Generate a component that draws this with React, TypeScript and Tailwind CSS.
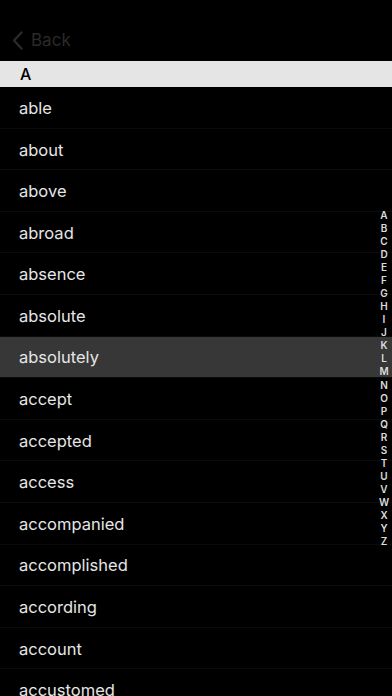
import React from 'react';

const words = [
  'able', 'about', 'above', 'abroad', 'absence', 'absolute', 'absolutely', 'accept',
  'accepted', 'access', 'accompanied', 'accomplished', 'according', 'account',
  'accustomed',
];

const letters = 'ABCDEFGHIJKLMNOPQRSTUVWXYZ'.split('');

export default function App() {
  return (
    <div className="h-[696px] w-[392px] overflow-hidden bg-black text-[#e6e6e6]" style={{ fontFamily: 'Inter, "Noto Sans", sans-serif' }}>
      {/* Nav bar */}
      <div className="flex h-[61px] items-end pb-[8px] pl-[11px]">
        <button className="flex items-center gap-[7px] text-[17px] text-[#2a2a2a]">
          <svg width="13" height="21" viewBox="0 0 13 21" fill="none">
            <path d="M10.5 2.5 L3 10.5 L10.5 18.5" stroke="#2a2a2a" strokeWidth="2.4" strokeLinecap="round" strokeLinejoin="round" />
          </svg>
          <span>Back</span>
        </button>
      </div>

      <div className="relative h-[635px]">
        {/* Section header */}
        <div className="flex h-[26px] items-center bg-[#e5e5e5] pl-[20px] text-[16px] font-medium text-black">A</div>

        {/* Rows */}
        {words.map((w) => (
          <div
            key={w}
            className={`flex h-[41.6px] items-center border-b border-[#0b0b0b] pt-[2px] pl-[19px] text-[16.5px] ${w === 'absolutely' ? 'bg-[#373737]' : ''}`}
          >
            {w}
          </div>
        ))}

        {/* Section index */}
        <div className="absolute right-0 top-0 flex h-full w-[16px] flex-col items-center justify-center">
          {letters.map((l) => (
            <span key={l} className="h-[13.05px] text-[10px] font-semibold leading-[13px] text-[#dcdcdc]">{l}</span>
          ))}
        </div>
      </div>
    </div>
  );
}
